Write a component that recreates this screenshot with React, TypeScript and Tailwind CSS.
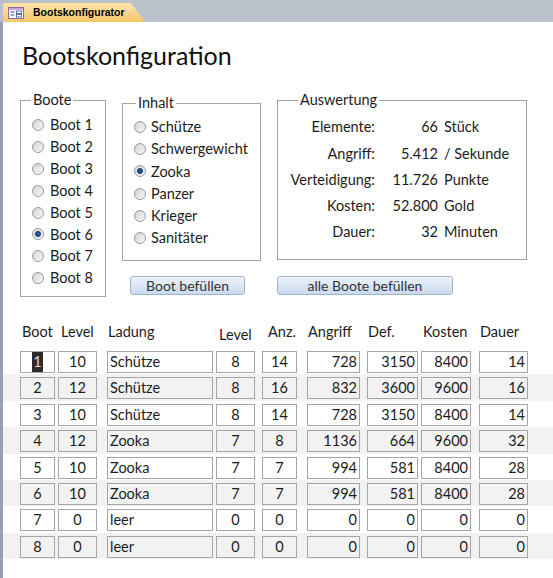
import React from "react";

const boote = ["Boot 1", "Boot 2", "Boot 3", "Boot 4", "Boot 5", "Boot 6", "Boot 7", "Boot 8"];
const inhalt = ["Schütze", "Schwergewicht", "Zooka", "Panzer", "Krieger", "Sanitäter"];

const auswertung = [
  { label: "Elemente:", value: "66", unit: "Stück" },
  { label: "Angriff:", value: "5.412", unit: "/ Sekunde" },
  { label: "Verteidigung:", value: "11.726", unit: "Punkte" },
  { label: "Kosten:", value: "52.800", unit: "Gold" },
  { label: "Dauer:", value: "32", unit: "Minuten" },
];

// column boxes: margin-left + width + alignment, header offsets
const cols = [
  { cls: "ml-[17px] w-[35px] justify-center", head: "Boot", hcls: "ml-[17px] w-[35px] pl-[2px]" },
  { cls: "ml-[3px] w-[39px] justify-center", head: "Level", hcls: "ml-[3px] w-[39px] pl-[3px]" },
  { cls: "ml-[10px] w-[106px] justify-start pl-[2px]", head: "Ladung", hcls: "ml-[10px] w-[106px] pl-[1px]" },
  { cls: "ml-[3px] w-[39px] justify-center", head: "Level", hcls: "ml-[3px] w-[39px] pl-[3px] pt-[3px]" },
  { cls: "ml-[7px] w-[35px] justify-center", head: "Anz.", hcls: "ml-[7px] w-[35px] pl-[6px]" },
  { cls: "ml-[10px] w-[53px] justify-end pr-[2px]", head: "Angriff", hcls: "ml-[10px] w-[53px] pl-[1px]" },
  { cls: "ml-[7px] w-[51px] justify-end pr-[2px]", head: "Def.", hcls: "ml-[7px] w-[51px] pl-[1px]" },
  { cls: "ml-[3px] w-[50px] justify-end pr-[2px]", head: "Kosten", hcls: "ml-[3px] w-[50px] pl-[2px]" },
  { cls: "ml-[8px] w-[49px] justify-end pr-[2px]", head: "Dauer", hcls: "ml-[8px] w-[49px] pl-[1px]" },
];

const rows = [
  ["1", "10", "Schütze", "8", "14", "728", "3150", "8400", "14"],
  ["2", "12", "Schütze", "8", "16", "832", "3600", "9600", "16"],
  ["3", "10", "Schütze", "8", "14", "728", "3150", "8400", "14"],
  ["4", "12", "Zooka", "7", "8", "1136", "664", "9600", "32"],
  ["5", "10", "Zooka", "7", "7", "994", "581", "8400", "28"],
  ["6", "10", "Zooka", "7", "7", "994", "581", "8400", "28"],
  ["7", "0", "leer", "0", "0", "0", "0", "0", "0"],
  ["8", "0", "leer", "0", "0", "0", "0", "0", "0"],
];

const Radio = ({ checked }: { checked?: boolean }) => (
  <span className="w-[12px] h-[12px] rounded-full border border-[#9a9a9a] bg-gradient-to-br from-[#d4d4d4] to-[#f8f8f8] flex items-center justify-center shrink-0">
    {checked && <span className="w-[6px] h-[6px] rounded-full bg-[#1f5c9e] border border-[#0d3563]" />}
  </span>
);

const FormIcon = () => (
  <svg width="16" height="12" viewBox="0 0 16 12" className="shrink-0">
    <rect x="0.5" y="0.5" width="15" height="11" fill="#fff" stroke="#8a6aa8" />
    <rect x="1" y="1" width="14" height="2" fill="#c9a6d6" />
    <rect x="2.5" y="4.5" width="4" height="1" fill="#3b4f8a" />
    <rect x="2.5" y="7.5" width="4" height="1" fill="#3b4f8a" />
    <rect x="8.5" y="4" width="5" height="2.5" fill="none" stroke="#3b4f8a" strokeWidth="0.8" />
    <rect x="8.5" y="7.5" width="5" height="2.5" fill="none" stroke="#3b4f8a" strokeWidth="0.8" />
  </svg>
);

export default function App() {
  return (
    <div className="w-[553px] h-[578px] bg-white flex flex-col overflow-hidden text-[#1c1c1c] font-['Lato','Liberation_Sans',sans-serif] text-[14.5px]">
      <header className="h-[22px] bg-[#bac1cb] flex items-end pl-[3px] shrink-0">
        <div className="h-[19px] w-[142px] rounded-tl-[3px] bg-gradient-to-b from-[#fde6ad] to-[#f6c469] [clip-path:polygon(0_0,90%_0,100%_100%,0_100%)] flex items-center pl-[5px] gap-[9px]">
          <FormIcon />
          <span className="font-['Liberation_Sans',sans-serif] font-bold text-[10.5px] text-black">Bootskonfigurator</span>
        </div>
      </header>

      <div className="flex-1 flex flex-col border-l-[3px] border-[#98a1ad]">
        <h1 className="ml-[19px] mt-[17px] h-[32px] leading-[32px] text-[25px] text-[#111]">Bootskonfiguration</h1>

        <div className="flex items-start mt-[20px] ml-[17px]">
          <fieldset className="w-[86px] h-[206px] border border-[#a3a3a3]">
            <legend className="ml-[10px] px-[2px] h-[18px] leading-[18px]">Boote</legend>
            <div className="pt-[5px] pl-[11px] flex flex-col">
              {boote.map((b, i) => (
                <label key={b} className="h-[21.9px] flex items-center gap-[6px]">
                  <Radio checked={i === 5} />
                  <span>{b}</span>
                </label>
              ))}
            </div>
          </fieldset>

          <div className="flex flex-col ml-[16px]">
            <div className="flex items-start">
              <fieldset className="mt-[3px] w-[139px] h-[167px] border border-[#a3a3a3]">
                <legend className="ml-[13px] px-[2px] h-[18px] leading-[18px]">Inhalt</legend>
                <div className="pt-[4px] pl-[11px] flex flex-col">
                  {inhalt.map((b, i) => (
                    <label key={b} className="h-[22.2px] flex items-center gap-[5px]">
                      <Radio checked={i === 2} />
                      <span>{b}</span>
                    </label>
                  ))}
                </div>
              </fieldset>

              <fieldset className="ml-[16px] w-[250px] h-[169px] border border-[#a3a3a3]">
                <legend className="ml-[20px] px-[2px] h-[18px] leading-[18px]">Auswertung</legend>
                <div className="pt-[5px] flex flex-col">
                  {auswertung.map((r) => (
                    <div key={r.label} className="h-[26.3px] flex items-center">
                      <span className="w-[97px] text-right">{r.label}</span>
                      <span className="w-[63px] text-right">{r.value}</span>
                      <span className="ml-[6px]">{r.unit}</span>
                    </div>
                  ))}
                </div>
              </fieldset>
            </div>

            <div className="flex mt-[15px]">
              <button className="ml-[8px] w-[115px] h-[19px] rounded-[3px] border border-[#9fb4d0] bg-gradient-to-b from-[#eef3fb] to-[#c9d9ef] leading-[17px] text-[14px] text-[#333]">
                Boot befüllen
              </button>
              <button className="ml-[32px] w-[176px] h-[19px] rounded-[3px] border border-[#9fb4d0] bg-gradient-to-b from-[#eef3fb] to-[#c9d9ef] leading-[17px] text-[14px] text-[#333]">
                alle Boote befüllen
              </button>
            </div>
          </div>
        </div>

        <div className="flex mt-[26px] h-[25px] items-start">
          {cols.map((c, i) => (
            <div key={i} className={`${c.hcls} shrink-0 h-[18px] leading-[18px]`}>{c.head}</div>
          ))}
        </div>

        <div className="flex flex-col">
          {rows.map((r, ri) => (
            <div key={ri} className={`h-[26.4px] flex items-start pt-[3px] ${ri % 2 === 1 ? "bg-[#f2f2f2]" : "bg-white"}`}>
              {r.map((v, ci) => (
                <div key={ci} className={`${cols[ci].cls} shrink-0 h-[22px] border border-[#a5a5a5] flex items-center leading-[20px]`}>
                  {ri === 0 && ci === 0 ? (
                    <span className="bg-[#2b2b2b] text-[#f4c8f0] px-[1px] leading-[20px]">{v}</span>
                  ) : (
                    v
                  )}
                </div>
              ))}
            </div>
          ))}
        </div>
      </div>
    </div>
  );
}
